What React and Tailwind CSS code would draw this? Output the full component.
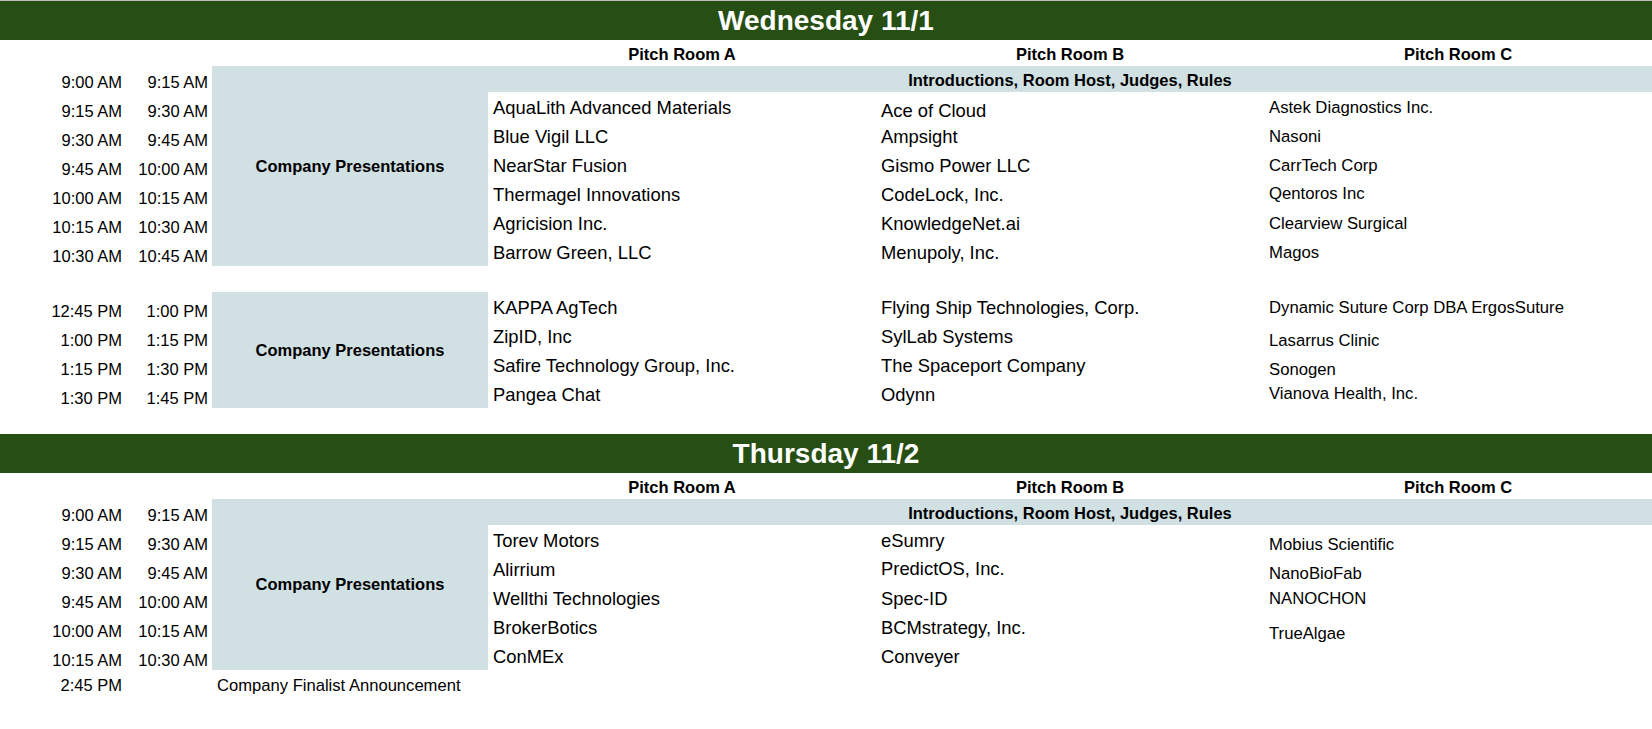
import React from 'react';

// top padding per "lift" (how far a name sits above the time baseline)
const liftLarge = { '-1': 'pt-[9px]', 0: 'pt-[8px]', 3: 'pt-[5px]', 4: 'pt-[4px]' };
const liftSmall = { '-1': 'pt-[12px]', 0: 'pt-[10px]', 3: 'pt-[6px]', 4: 'pt-[5px]' };

const wedMorning = [
  ['9:15 AM', '9:30 AM', ['AquaLith Advanced Materials', 3], ['Ace of Cloud', 0], ['Astek Diagnostics Inc.', 3]],
  ['9:30 AM', '9:45 AM', ['Blue Vigil LLC', 3], ['Ampsight', 3], ['Nasoni', 3]],
  ['9:45 AM', '10:00 AM', ['NearStar Fusion', 3], ['Gismo Power LLC', 3], ['CarrTech Corp', 3]],
  ['10:00 AM', '10:15 AM', ['Thermagel Innovations', 3], ['CodeLock, Inc.', 3], ['Qentoros Inc', 4]],
  ['10:15 AM', '10:30 AM', ['Agricision Inc.', 3], ['KnowledgeNet.ai', 3], ['Clearview Surgical', 3]],
  ['10:30 AM', '10:45 AM', ['Barrow Green, LLC', 3], ['Menupoly, Inc.', 3], ['Magos', 3]],
];

const wedAfternoon = [
  ['12:45 PM', '1:00 PM', ['KAPPA AgTech', 3], ['Flying Ship Technologies, Corp.', 3], ['Dynamic Suture Corp DBA ErgosSuture', 3]],
  ['1:00 PM', '1:15 PM', ['ZipID, Inc', 3], ['SylLab Systems', 3], ['Lasarrus Clinic', 0]],
  ['1:15 PM', '1:30 PM', ['Safire Technology Group, Inc.', 3], ['The Spaceport Company', 3], ['Sonogen', 0]],
  ['1:30 PM', '1:45 PM', ['Pangea Chat', 3], ['Odynn', 3], ['Vianova Health, Inc.', 4]],
];

const thuMorning = [
  ['9:15 AM', '9:30 AM', ['Torev Motors', 3], ['eSumry', 3], ['Mobius Scientific', 0]],
  ['9:30 AM', '9:45 AM', ['Alirrium', 3], ['PredictOS, Inc.', 4], ['NanoBioFab', 0]],
  ['9:45 AM', '10:00 AM', ['Wellthi Technologies', 3], ['Spec-ID', 3], ['NANOCHON', 3]],
  ['10:00 AM', '10:15 AM', ['BrokerBotics', 3], ['BCMstrategy, Inc.', 3], ['TrueAlgae', -1]],
  ['10:15 AM', '10:30 AM', ['ConMEx', 3], ['Conveyer', 3], null],
];

const gridCols = 'grid grid-cols-[126px_86px_276px_388px_388px_388px]';

const DayBar = ({ title }) => (
  <div className="h-[39px] bg-[#274e13] flex items-center justify-center text-white font-bold text-[28px] leading-none">
    {title}
  </div>
);

const TimeCell = ({ children, h = 'h-[29px] pt-[9.5px]' }) => (
  <div className={`${h} text-right pr-[4px] text-[16.5px] leading-[19px] whitespace-nowrap`}>
    {children}
  </div>
);

const CompanyCell = ({ item, small }) => {
  if (!item) return <div className="h-[29px]" />;
  const [name, lift] = item;
  const pad = small ? liftSmall[lift] : liftLarge[lift];
  return (
    <div
      className={`h-[29px] bg-white pl-[5px] whitespace-nowrap ${pad} ${
        small ? 'text-[16.7px] leading-[19px]' : 'text-[18.4px] leading-[21px]'
      }`}
    >
      {name}
    </div>
  );
};

const PresentationsBlock = ({ span }) => (
  <div className={`${span} bg-[#d0e0e3] flex items-center justify-center font-bold text-[16.5px]`}>
    Company Presentations
  </div>
);

const SessionRows = ({ rows }) =>
  rows.map((r) => (
    <React.Fragment key={r[0]}>
      <TimeCell>{r[0]}</TimeCell>
      <TimeCell>{r[1]}</TimeCell>
      <CompanyCell item={r[2]} />
      <CompanyCell item={r[3]} />
      <CompanyCell item={r[4]} small />
    </React.Fragment>
  ));

const RoomHeader = () => (
  <>
    <div className="col-span-3 h-[26px]" />
    {['Pitch Room A', 'Pitch Room B', 'Pitch Room C'].map((room) => (
      <div key={room} className="h-[26px] pt-[2px] flex items-center justify-center font-bold text-[16.5px]">
        {room}
      </div>
    ))}
  </>
);

const IntroRow = ({ span }) => (
  <>
    <TimeCell h="h-[26px] pt-[7px]">9:00 AM</TimeCell>
    <TimeCell h="h-[26px] pt-[7px]">9:15 AM</TimeCell>
    <PresentationsBlock span={span} />
    <div className="col-span-3 h-[26px] pt-[2px] bg-[#d0e0e3] flex items-center justify-center font-bold text-[16.5px]">
      Introductions, Room Host, Judges, Rules
    </div>
  </>
);

export default function App() {
  return (
    <div className="w-[1652px] min-h-[729px] bg-white text-black font-['Liberation_Sans',Arial,sans-serif] border-t border-[#bdbdbd]">
      <DayBar title="Wednesday 11/1" />
      <div className={gridCols}>
        <RoomHeader />
        <IntroRow span="row-span-7" />
        <SessionRows rows={wedMorning} />
      </div>

      <div className="h-[26px]" />

      <div className={gridCols}>
        {wedAfternoon.map((r, i) => (
          <React.Fragment key={r[0]}>
            <TimeCell>{r[0]}</TimeCell>
            <TimeCell>{r[1]}</TimeCell>
            {i === 0 && <PresentationsBlock span="row-span-4" />}
            <CompanyCell item={r[2]} />
            <CompanyCell item={r[3]} />
            <CompanyCell item={r[4]} small />
          </React.Fragment>
        ))}
      </div>

      <div className="h-[26px]" />

      <DayBar title="Thursday 11/2" />
      <div className={gridCols}>
        <RoomHeader />
        <IntroRow span="row-span-6" />
        <SessionRows rows={thuMorning} />
        <TimeCell h="h-[29px] pt-[6px]">2:45 PM</TimeCell>
        <TimeCell h="h-[29px]" />
        <div className="col-span-4 h-[29px] pt-[6px] pl-[5px] text-[16.6px] leading-[19px] whitespace-nowrap">
          Company Finalist Announcement
        </div>
      </div>
    </div>
  );
}
